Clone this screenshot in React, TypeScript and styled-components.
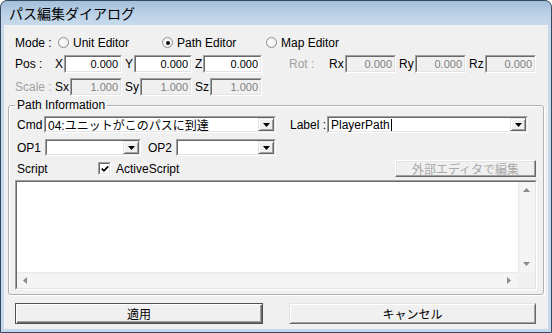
import styled, { createGlobalStyle } from "styled-components";

const GlobalStyle = createGlobalStyle`
  html, body {
    margin: 0;
    padding: 0;
    background: #ffffff;
  }
  body {
    font-family: "Liberation Sans", "Noto Sans CJK JP", sans-serif;
    font-size: 12px;
    color: #000;
  }
  * {
    box-sizing: border-box;
  }
`;

const Frame = styled.div`
  width: 552px;
  height: 333px;
  border: 1px solid #34495e;
  border-radius: 7px 7px 0 0;
  background: linear-gradient(180deg, #a3bfdb 0px, #bcd2e7 14px, #c6daec 24px, #c3d8eb 100%);
  padding: 0 3px 3px;
  display: flex;
  flex-direction: column;
  overflow: hidden;
`;

const TitleBar = styled.div`
  height: 24px;
  display: flex;
  align-items: center;
  padding-left: 5px;
  font-family: "Noto Sans CJK JP", sans-serif;
  font-size: 14px;
  color: #000;
`;

const Client = styled.div`
  flex: 1;
  background: #f0f0f0;
  padding: 9px 4px 0 4px;
`;

const TopSection = styled.div`
  padding-left: 7px;
`;

const ModeRow = styled.div`
  display: flex;
  align-items: center;
  height: 17px;
`;

const Row = styled.div<{ $gap: number }>`
  display: flex;
  align-items: center;
  height: 18px;
  margin-top: ${(p) => p.$gap}px;
`;

const RowLabel = styled.span<{ $muted?: boolean; $offset?: number }>`
  width: 40px;
  flex: none;
  margin-left: ${(p) => p.$offset ?? 0}px;
  color: ${(p) => (p.$muted ? "#a0a0a0" : "#000")};
  white-space: pre;
`;

const ModeLabel = styled.span`
  width: 43px;
  flex: none;
`;

const RadioOption = styled.label`
  width: 104px;
  flex: none;
  display: flex;
  align-items: center;
  gap: 4px;
`;

const RadioDot = styled.span<{ $on?: boolean }>`
  width: 11px;
  height: 11px;
  border-radius: 50%;
  border: 1px solid #8e8f8f;
  background: radial-gradient(circle at 40% 40%, #ffffff 0%, #f1f1f1 60%, #dcdcdc 100%);
  display: flex;
  align-items: center;
  justify-content: center;
  &::after {
    content: "";
    width: 4px;
    height: 4px;
    border-radius: 50%;
    background: #111;
    display: ${(p) => (p.$on ? "block" : "none")};
  }
`;

const FieldGroup = styled.div`
  width: 67px;
  margin-right: 3px;
  flex: none;
  display: flex;
  align-items: center;
  height: 18px;
  gap: 1px;
`;

const AxisLabel = styled.span`
  flex: none;
`;

const Sunken = styled.div<{ $w?: number; $h: number }>`
  width: ${(p) => (p.$w ? `${p.$w}px` : "auto")};
  height: ${(p) => p.$h}px;
  flex: ${(p) => (p.$w ? "none" : "1")};
  border: 1px solid;
  border-color: #a0a0a0 #ffffff #ffffff #a0a0a0;
`;

const SunkenInner = styled.div<{ $disabled?: boolean }>`
  height: 100%;
  border: 1px solid;
  border-color: #696969 #e3e3e3 #e3e3e3 #696969;
  background: ${(p) => (p.$disabled ? "#f0f0f0" : "#ffffff")};
  display: flex;
  align-items: center;
`;

const NumberText = styled.span<{ $disabled?: boolean }>`
  flex: 1;
  text-align: right;
  padding-right: 2px;
  font-size: 11px;
  color: ${(p) => (p.$disabled ? "#808080" : "#000")};
`;

const GroupBox = styled.fieldset`
  margin: 2px 0 0 0;
  width: 536px;
  border: 1px solid #b0b0b0;
  border-radius: 3px;
  box-shadow: inset 1px 1px 0 #ffffff, 1px 1px 0 #ffffff;
  padding: 4px 5px 4px 6px;
`;

const Legend = styled.legend`
  padding: 0 2px;
  line-height: 14px;
  font-size: 12px;
`;

const FormRow = styled.div<{ $gap: number }>`
  display: flex;
  align-items: center;
  height: 17px;
  margin-top: ${(p) => p.$gap}px;
`;

const InlineLabel = styled.span<{ $w: number; $offset?: number }>`
  width: ${(p) => p.$w}px;
  margin-left: ${(p) => p.$offset ?? 0}px;
  padding-left: 2px;
  flex: none;
  white-space: pre;
`;

const ComboText = styled.span`
  flex: 1;
  padding-left: 2px;
  font-size: 12px;
  white-space: nowrap;
  overflow: hidden;
  display: flex;
  align-items: center;
`;

const Caret = styled.span`
  width: 1px;
  height: 12px;
  background: #000;
  margin-left: 1px;
`;

const DropButton = styled.span`
  width: 16px;
  height: 100%;
  flex: none;
  background: #f0f0f0;
  border: 1px solid;
  border-color: #e3e3e3 #696969 #696969 #e3e3e3;
  box-shadow: inset 1px 1px 0 #ffffff, inset -1px -1px 0 #a0a0a0;
  display: flex;
  align-items: center;
  justify-content: center;
`;

const CheckBox = styled.span`
  width: 13px;
  height: 13px;
  flex: none;
  border: 1px solid;
  border-color: #a0a0a0 #ffffff #ffffff #a0a0a0;
  display: flex;
`;

const CheckInner = styled.span`
  flex: 1;
  border: 1px solid;
  border-color: #696969 #e3e3e3 #e3e3e3 #696969;
  background: #fff;
  display: flex;
  align-items: center;
  justify-content: center;
`;

const CheckText = styled.span`
  margin-left: 5px;
`;

const SmallButton = styled.button`
  margin-left: auto;
  margin-right: 2px;
  width: 141px;
  height: 17px;
  padding: 0;
  background: #f0f0f0;
  border: 1px solid;
  border-color: #ffffff #696969 #696969 #ffffff;
  box-shadow: inset -1px -1px 0 #a0a0a0, inset 1px 1px 0 #e3e3e3;
  font-family: "Noto Sans CJK JP", sans-serif;
  font-size: 12px;
  line-height: 13px;
  color: #a8a8a8;
`;

const Editor = styled.div`
  margin-top: 3px;
  width: 522px;
  height: 110px;
  border: 1px solid;
  border-color: #a0a0a0 #ffffff #ffffff #a0a0a0;
`;

const EditorInner = styled.div`
  height: 100%;
  border: 1px solid;
  border-color: #696969 #e3e3e3 #e3e3e3 #696969;
  background: #fff;
  display: grid;
  grid-template-columns: 1fr 17px;
  grid-template-rows: 1fr 16px;
`;

const TextSpace = styled.div`
  background: #fff;
`;

const ScrollTrack = styled.div<{ $dir: "v" | "h" }>`
  background: ${(p) =>
    p.$dir === "v"
      ? "linear-gradient(90deg, #e6e6e6 0px, #f4f4f4 2px, #f4f4f4 100%)"
      : "linear-gradient(180deg, #e6e6e6 0px, #f4f4f4 2px, #f4f4f4 100%)"};
  display: flex;
  flex-direction: ${(p) => (p.$dir === "v" ? "column" : "row")};
  justify-content: space-between;
  align-items: center;
  padding: ${(p) => (p.$dir === "v" ? "6px 0 6px" : "0 7px 0 6px")};
`;

const ScrollCorner = styled.div`
  background: #f0f0f0;
`;

const ButtonRow = styled.div`
  display: flex;
  margin-top: 8px;
  padding-left: 7px;
`;

const DialogButton = styled.button<{ $default?: boolean; $w: number; $offset?: number }>`
  width: ${(p) => p.$w}px;
  height: 21px;
  margin-left: ${(p) => p.$offset ?? 0}px;
  padding: 0;
  background: #f0f0f0;
  font-family: "Noto Sans CJK JP", sans-serif;
  font-size: 12px;
  color: #000;
  border: 1px solid;
  border-color: ${(p) =>
    p.$default ? "#505050" : "#e3e3e3 #696969 #696969 #e3e3e3"};
  box-shadow: ${(p) =>
    p.$default
      ? "inset 1px 1px 0 #ffffff, inset -1px -1px 0 #696969, inset -2px -2px 0 #a0a0a0"
      : "inset 1px 1px 0 #ffffff, inset -1px -1px 0 #a0a0a0"};
`;

function Arrow({ dir, color = "#000" }: { dir: "up" | "down" | "left" | "right"; color?: string }) {
  const pts = {
    down: "0,0 7,0 3.5,4",
    up: "0,4 7,4 3.5,0",
    left: "4,0 4,7 0,3.5",
    right: "0,0 0,7 4,3.5",
  }[dir];
  const vertical = dir === "up" || dir === "down";
  return (
    <svg width={vertical ? 7 : 4} height={vertical ? 4 : 7} viewBox={vertical ? "0 0 7 4" : "0 0 4 7"}>
      <polygon points={pts} fill={color} />
    </svg>
  );
}

function NumberField({ value, disabled }: { value: string; disabled?: boolean }) {
  return (
    <Sunken $h={18}>
      <SunkenInner $disabled={disabled}>
        <NumberText $disabled={disabled}>{value}</NumberText>
      </SunkenInner>
    </Sunken>
  );
}

function Combo({ w, text, caret }: { w: number; text?: string; caret?: boolean }) {
  return (
    <Sunken $w={w} $h={17}>
      <SunkenInner>
        <ComboText>
          {text}
          {caret && <Caret />}
        </ComboText>
        <DropButton>
          <Arrow dir="down" />
        </DropButton>
      </SunkenInner>
    </Sunken>
  );
}

export default function App() {
  return (
    <>
      <GlobalStyle />
      <Frame>
        <TitleBar>パス編集ダイアログ</TitleBar>
        <Client>
          <TopSection>
            <ModeRow>
              <ModeLabel>Mode :</ModeLabel>
              <RadioOption>
                <RadioDot />
                Unit Editor
              </RadioOption>
              <RadioOption>
                <RadioDot $on />
                Path Editor
              </RadioOption>
              <RadioOption>
                <RadioDot />
                Map Editor
              </RadioOption>
            </ModeRow>

            <Row $gap={4}>
              <RowLabel>Pos :</RowLabel>
              <FieldGroup>
                <AxisLabel>X</AxisLabel>
                <NumberField value="0.000" />
              </FieldGroup>
              <FieldGroup>
                <AxisLabel>Y</AxisLabel>
                <NumberField value="0.000" />
              </FieldGroup>
              <FieldGroup>
                <AxisLabel>Z</AxisLabel>
                <NumberField value="0.000" />
              </FieldGroup>
              <RowLabel $muted $offset={24}>Rot :</RowLabel>
              <FieldGroup>
                <AxisLabel>Rx</AxisLabel>
                <NumberField value="0.000" disabled />
              </FieldGroup>
              <FieldGroup>
                <AxisLabel>Ry</AxisLabel>
                <NumberField value="0.000" disabled />
              </FieldGroup>
              <FieldGroup>
                <AxisLabel>Rz</AxisLabel>
                <NumberField value="0.000" disabled />
              </FieldGroup>
            </Row>

            <Row $gap={5}>
              <RowLabel $muted>Scale :</RowLabel>
              <FieldGroup>
                <AxisLabel>Sx</AxisLabel>
                <NumberField value="1.000" disabled />
              </FieldGroup>
              <FieldGroup>
                <AxisLabel>Sy</AxisLabel>
                <NumberField value="1.000" disabled />
              </FieldGroup>
              <FieldGroup>
                <AxisLabel>Sz</AxisLabel>
                <NumberField value="1.000" disabled />
              </FieldGroup>
            </Row>
          </TopSection>

          <GroupBox>
            <Legend>Path Information</Legend>
            <FormRow $gap={0}>
              <InlineLabel $w={29}>Cmd</InlineLabel>
              <Combo w={232} text="04:ユニットがこのパスに到達" />
              <InlineLabel $w={39} $offset={12}>Label :</InlineLabel>
              <Combo w={201} text="PlayerPath" caret />
            </FormRow>
            <FormRow $gap={6}>
              <InlineLabel $w={30}>OP1</InlineLabel>
              <Combo w={96} />
              <InlineLabel $w={30} $offset={5}>OP2</InlineLabel>
              <Combo w={100} />
            </FormRow>
            <FormRow $gap={4}>
              <InlineLabel $w={83}>Script</InlineLabel>
              <CheckBox>
                <CheckInner>
                  <svg width="8" height="8" viewBox="0 0 8 8">
                    <polyline points="0.8,3.6 3,5.8 7.2,1.4" fill="none" stroke="#000" strokeWidth="1.8" />
                  </svg>
                </CheckInner>
              </CheckBox>
              <CheckText>ActiveScript</CheckText>
              <SmallButton disabled>外部エディタで編集</SmallButton>
            </FormRow>
            <Editor>
              <EditorInner>
                <TextSpace />
                <ScrollTrack $dir="v">
                  <Arrow dir="up" color="#8a8a8a" />
                  <Arrow dir="down" color="#8a8a8a" />
                </ScrollTrack>
                <ScrollTrack $dir="h">
                  <Arrow dir="left" color="#8a8a8a" />
                  <Arrow dir="right" color="#8a8a8a" />
                </ScrollTrack>
                <ScrollCorner />
              </EditorInner>
            </Editor>
          </GroupBox>

          <ButtonRow>
            <DialogButton $default $w={248}>適用</DialogButton>
            <DialogButton $w={247} $offset={26}>キャンセル</DialogButton>
          </ButtonRow>
        </Client>
      </Frame>
    </>
  );
}
